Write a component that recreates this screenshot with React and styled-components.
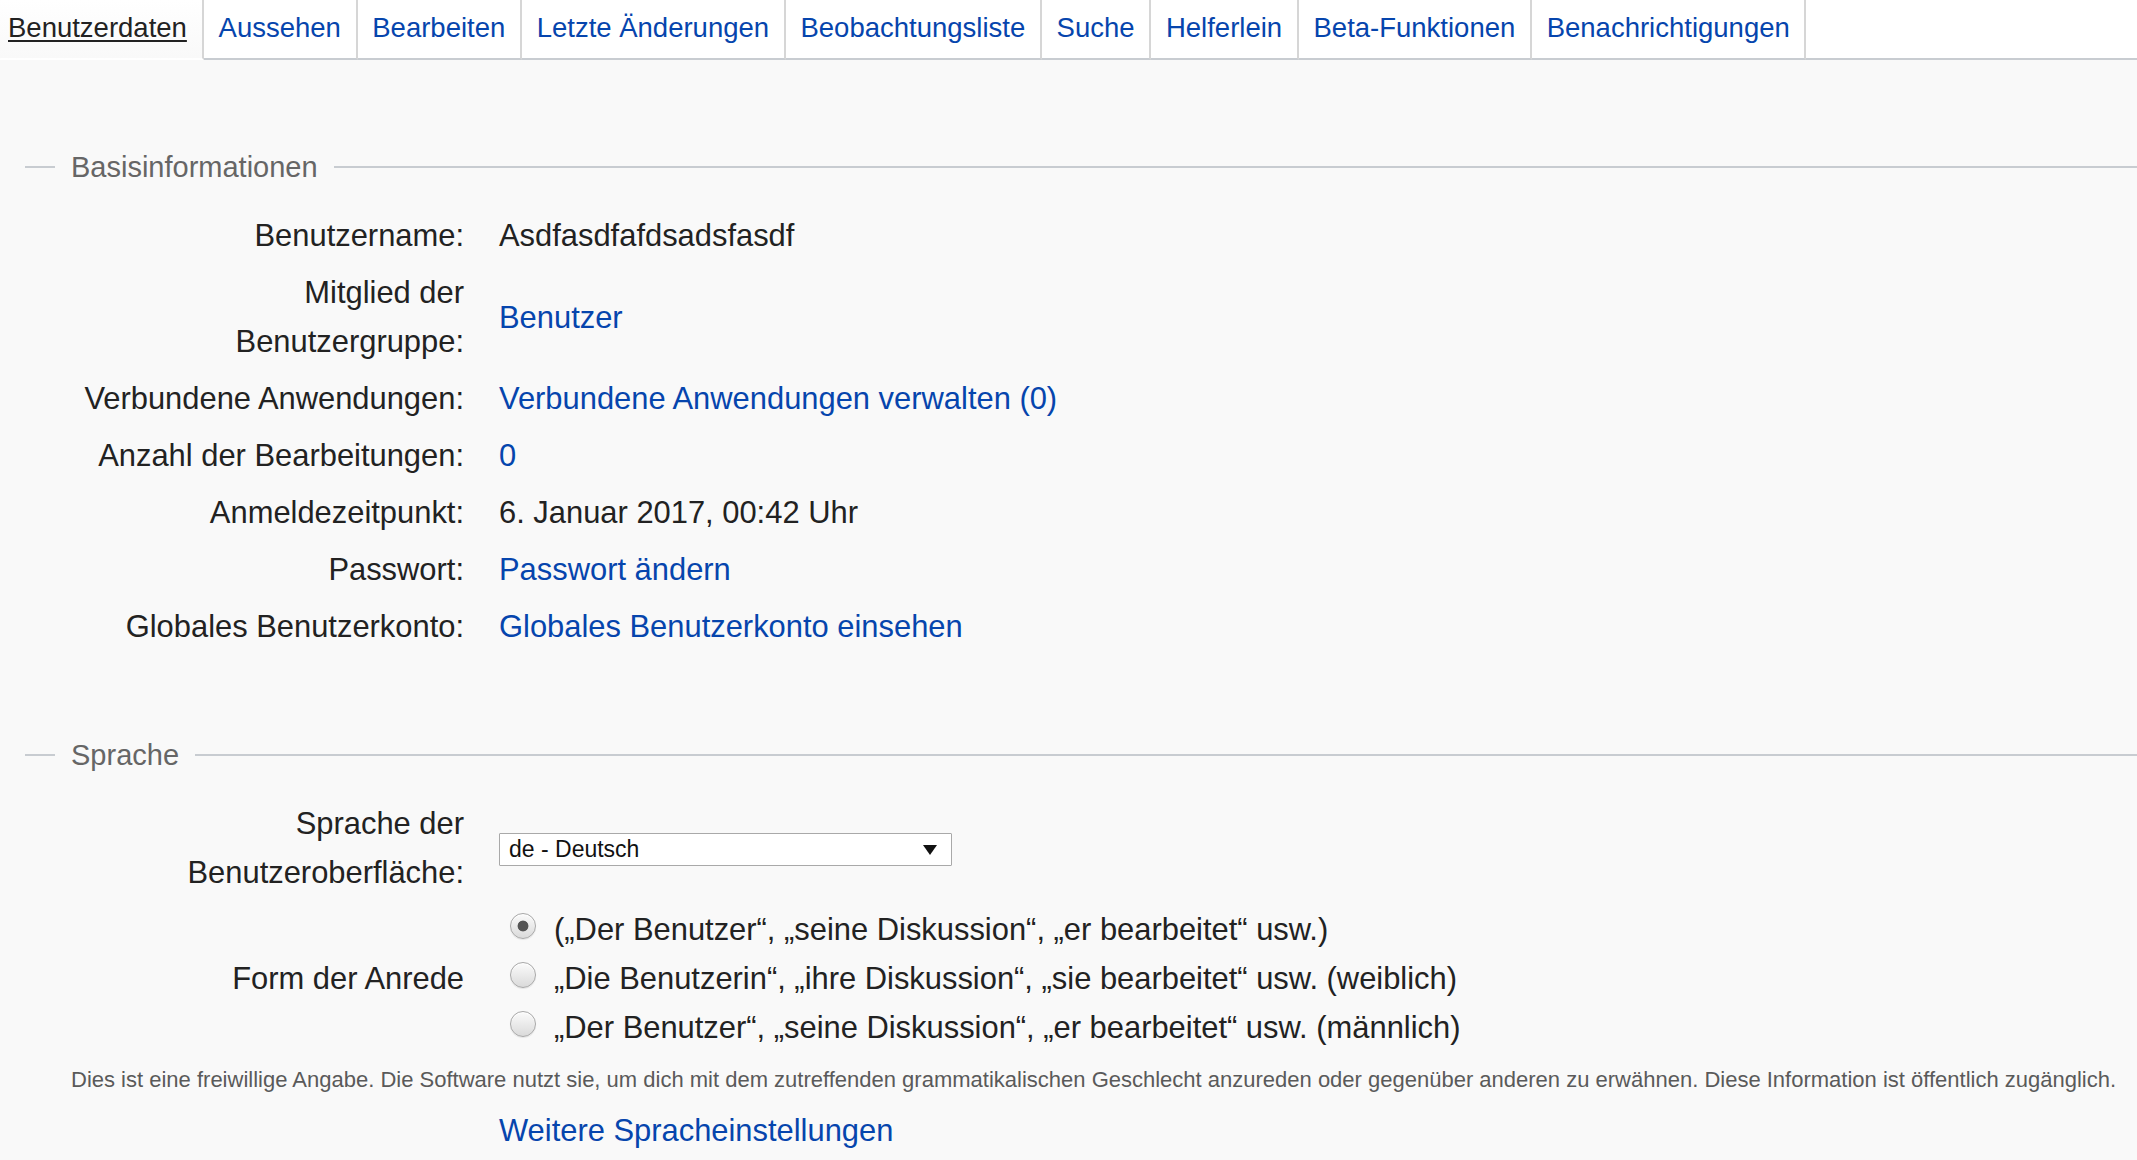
import React from "react";
import styled, { createGlobalStyle } from "styled-components";

const GlobalStyle = createGlobalStyle`
  html, body {
    margin: 0;
    padding: 0;
    background: #f9f9f9;
  }
  body {
    font-family: "Liberation Sans", Arial, sans-serif;
    color: #222;
  }
`;

const TabBar = styled.nav`
  display: flex;
  height: 60px;
  background: #fff;
`;

const Tab = styled.a`
  display: flex;
  align-items: center;
  box-sizing: border-box;
  height: 60px;
  padding: 0 14.7px 3px;
  font-size: 27.5px;
  color: #0645ad;
  text-decoration: none;
  border-right: 2px solid #d6d6d6;
  border-bottom: 2px solid #c8ccd1;
  cursor: pointer;

  &.selected {
    padding-left: 8px;
    padding-right: 15px;
    color: #222;
    text-decoration: underline;
    text-underline-offset: 3px;
    border-bottom-color: transparent;
    background: linear-gradient(#ffffff 0%, #f9f9f9 100%);
  }
`;

const TabFiller = styled.div`
  flex: 1;
  border-bottom: 2px solid #c8ccd1;
`;

const Section = styled.fieldset`
  margin: ${(p) => p.$top}px 0 0 25px;
  padding: 0;
  border: none;
  border-top: 2px solid #c8ccd1;
  min-width: 0;
`;

const Legend = styled.legend`
  margin-left: 30px;
  padding: 0 16px;
  font-size: 29px;
  line-height: 46px;
  color: #666;
`;

const Fields = styled.div`
  display: grid;
  grid-template-columns: 439px 1fr;
  column-gap: 35px;
  margin-top: 17px;
  font-size: 30.9px;
  line-height: 49px;
`;

const Label = styled.div`
  text-align: right;
  white-space: pre-line;
  padding: 4px 0;
  align-self: center;
  color: #222;
`;

const Value = styled.div`
  padding: 4px 0;
  align-self: center;
  color: #222;
  grid-column: ${(p) => p.$col || "auto"};
`;

const Link = styled.a`
  color: #0645ad;
  text-decoration: none;
  cursor: pointer;
`;

const SelectWrap = styled.div`
  position: relative;
  width: 453px;
  height: 33px;
  margin-top: 2px;

  &::after {
    content: "";
    position: absolute;
    right: 15px;
    top: 12px;
    border-left: 7px solid transparent;
    border-right: 7px solid transparent;
    border-top: 10px solid #111;
    pointer-events: none;
  }
`;

const Select = styled.select`
  display: block;
  appearance: none;
  box-sizing: border-box;
  width: 100%;
  height: 100%;
  margin: 0;
  padding: 0 0 0 9px;
  border: 1px solid #a9a9a9;
  border-radius: 1px;
  background: #fff;
  font-family: "Liberation Sans", Arial, sans-serif;
  font-size: 23px;
  line-height: normal;
  color: #111;
  outline: none;
`;

const RadioList = styled.div`
  padding: 4px 0;
`;

const RadioRow = styled.label`
  display: flex;
  align-items: center;
  height: 49px;
  cursor: pointer;
`;

const Radio = styled.input`
  appearance: none;
  box-sizing: border-box;
  width: 26px;
  height: 26px;
  margin: 0 18px 8px 11px;
  border-radius: 50%;
  border: 1px solid #a8a8a8;
  background: linear-gradient(#fbfbfb, #dadada);
  box-shadow: inset 0 1px 1px #fff, 0 1px 1px rgba(0, 0, 0, 0.08);
  flex: none;

  &:checked {
    background: radial-gradient(circle, #555 0, #555 5px, transparent 5.8px),
      linear-gradient(#fbfbfb, #dadada);
  }
`;

const Help = styled.div`
  grid-column: 1 / -1;
  padding: 6px 0 5px 46px;
  font-size: 22px;
  line-height: 35px;
  color: #5a5a5a;
`;

const tabs = [
  "Benutzerdaten",
  "Aussehen",
  "Bearbeiten",
  "Letzte Änderungen",
  "Beobachtungsliste",
  "Suche",
  "Helferlein",
  "Beta-Funktionen",
  "Benachrichtigungen",
];

const basisRows = [
  ["Benutzername:", "Asdfasdfafdsadsfasdf", false],
  ["Mitglied der\nBenutzergruppe:", "Benutzer", true],
  ["Verbundene Anwendungen:", "Verbundene Anwendungen verwalten (0)", true],
  ["Anzahl der Bearbeitungen:", "0", true],
  ["Anmeldezeitpunkt:", "6. Januar 2017, 00:42 Uhr", false],
  ["Passwort:", "Passwort ändern", true],
  ["Globales Benutzerkonto:", "Globales Benutzerkonto einsehen", true],
];

const anreden = [
  "(„Der Benutzer“, „seine Diskussion“, „er bearbeitet“ usw.)",
  "„Die Benutzerin“, „ihre Diskussion“, „sie bearbeitet“ usw. (weiblich)",
  "„Der Benutzer“, „seine Diskussion“, „er bearbeitet“ usw. (männlich)",
];

export default function App() {
  const [active, setActive] = React.useState(0);
  const [gender, setGender] = React.useState(0);

  return (
    <>
      <GlobalStyle />
      <TabBar>
        {tabs.map((t, i) => (
          <Tab
            key={t}
            className={i === active ? "selected" : ""}
            onClick={() => setActive(i)}
          >
            {t}
          </Tab>
        ))}
        <TabFiller />
      </TabBar>

      <Section $top={84}>
        <Legend>Basisinformationen</Legend>
        <Fields>
          {basisRows.map(([label, value, isLink]) => (
            <React.Fragment key={label}>
              <Label>{label}</Label>
              <Value>{isLink ? <Link>{value}</Link> : value}</Value>
            </React.Fragment>
          ))}
        </Fields>
      </Section>

      <Section $top={77}>
        <Legend>Sprache</Legend>
        <Fields>
          <Label>{"Sprache der\nBenutzeroberfläche:"}</Label>
          <Value>
            <SelectWrap>
              <Select defaultValue="de">
                <option value="de">de - Deutsch</option>
              </Select>
            </SelectWrap>
          </Value>

          <Label>Form der Anrede</Label>
          <RadioList>
            {anreden.map((text, i) => (
              <RadioRow key={text}>
                <Radio
                  type="radio"
                  name="gender"
                  checked={gender === i}
                  onChange={() => setGender(i)}
                />
                {text}
              </RadioRow>
            ))}
          </RadioList>

          <Help>
            Dies ist eine freiwillige Angabe. Die Software nutzt sie, um dich mit
            dem zutreffenden grammatikalischen Geschlecht anzureden oder gegenüber
            anderen zu erwähnen. Diese Information ist öffentlich zugänglich.
          </Help>

          <Value $col="2">
            <Link>Weitere Spracheinstellungen</Link>
          </Value>
        </Fields>
      </Section>
    </>
  );
}
